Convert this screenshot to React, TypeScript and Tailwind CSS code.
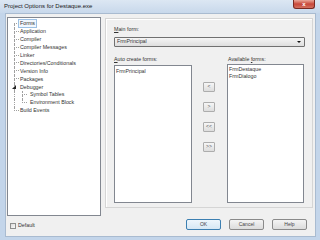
import React from 'react';

type TreeItem = { label: string; level: 0 | 1; last?: boolean; expander?: boolean; selected?: boolean };

const TREE: TreeItem[] = [
    { label: 'Forms', level: 0, selected: true },
    { label: 'Application', level: 0 },
    { label: 'Compiler', level: 0 },
    { label: 'Compiler Messages', level: 0 },
    { label: 'Linker', level: 0 },
    { label: 'Directories/Conditionals', level: 0 },
    { label: 'Version Info', level: 0 },
    { label: 'Packages', level: 0 },
    { label: 'Debugger', level: 0, expander: true },
    { label: 'Symbol Tables', level: 1 },
    { label: 'Environment Block', level: 1, last: true },
    { label: 'Build Events', level: 0, last: true },
];

// one connector column of the tree: vertical dotted line + branch to the label
const Connector = ({ last, first }: { last?: boolean; first?: boolean }) => (
    <div className="w-[5px] h-full flex flex-col shrink-0">
        <div className={`h-1/2 w-full border-b border-dotted border-[#a0a0a0] ${first ? '' : 'border-l'}`} />
        <div className={`flex-1 w-full ${last ? '' : 'border-l border-dotted border-[#a0a0a0]'}`} />
    </div>
);

const TreeRow = ({ item, index }: { item: TreeItem; index: number }) => (
    <div className="flex items-center h-[7.9px] pl-[6px]">
        {item.level === 1 && (
            <div className="w-[8px] h-full shrink-0 border-l border-dotted border-[#a0a0a0]" />
        )}
        {item.expander ? (
            <div className="w-[5px] h-full flex flex-col shrink-0">
                <div className="h-[2px] border-l border-dotted border-[#a0a0a0]" />
                <div className="h-[4px] -ml-[2px] flex items-center">
                    <svg width="4" height="4" viewBox="0 0 4 4">
                        <polygon points="4,0 4,4 0,4" fill="#262626" />
                    </svg>
                </div>
                <div className="flex-1 border-l border-dotted border-[#a0a0a0]" />
            </div>
        ) : (
            <Connector last={item.last} first={index === 0} />
        )}
        <span
            className={`whitespace-nowrap leading-[7px] px-[1px] ${item.level === 1 ? 'ml-[1px]' : '-ml-[1px]'} ${item.selected ? 'border border-[#9cc0e4] bg-[#f1f7fe] -my-[1px]' : 'border border-transparent'}`}
        >
            {item.label}
        </span>
    </div>
);

const SmallButton = ({ label }: { label: string }) => (
    <div className="w-[12px] h-[10px] rounded-[1px] border border-[#adadad] bg-linear-to-b from-[#f6f6f6] to-[#dddddd] flex items-center justify-center text-[5px] text-[#555]">
        {label}
    </div>
);

const DialogButton = ({ label, isDefault }: { label: string; isDefault?: boolean }) => (
    <div
        className={`w-[35px] h-[11px] rounded-[2px] border flex items-center justify-center text-[5px] text-[#444] bg-linear-to-b ${
            isDefault ? 'border-[#3c7fb1] from-[#eef6fc] to-[#d6e7f4]' : 'border-[#8a8a8a] from-[#f4f4f4] to-[#dcdcdc]'
        }`}
    >
        {label}
    </div>
);

export default function App() {
    return (
        <div className="w-[320px] h-[240px] bg-[#c3d5ea] flex flex-col overflow-hidden font-['Liberation_Sans',Arial,sans-serif]">
            {/* title bar */}
            <div className="h-[13px] flex items-start justify-between pl-[4px] pr-[5px] bg-linear-to-b from-[#dce7f3] to-[#c8d8eb] shrink-0">
                <span className="text-[6px] leading-[13px] text-[#1a1a1a]">Project Options for Destaque.exe</span>
                <div className="w-[22px] h-[9px] rounded-b-[3px] border border-t-0 border-[#7a2a22] bg-linear-to-b from-[#e8a699] via-[#c8473a] to-[#d2705f] flex items-center justify-center">
                    <span className="text-white text-[6px] font-bold leading-none">x</span>
                </div>
            </div>

            {/* client area */}
            <div className="ml-[5px] mr-[4px] h-[224px] bg-[#f0f0f0] border border-[#a9bbd0] flex flex-col text-[5.3px] text-[#333]">
                <div className="flex pt-[3px] pl-[1px]">
                    {/* options tree */}
                    <div className="w-[94px] h-[199px] bg-white border border-[#828790] pt-[2px] shrink-0">
                        {TREE.map((item, i) => (
                            <TreeRow key={item.label} item={item} index={i} />
                        ))}
                    </div>

                    {/* forms page */}
                    <div className="ml-[4px] mt-[1px] w-[208px] h-[190px] border border-[#d5d5d5] shadow-[inset_1px_1px_0_#ffffff] px-[8px] pt-[7px] flex flex-col">
                        <div className="leading-[7px]">
                            <span className="underline">M</span>ain form:
                        </div>
                        <div className="mt-[4px] w-[191px] h-[10px] rounded-[1px] border border-[#707070] bg-linear-to-b from-[#f5f5f5] to-[#dedede] flex items-center justify-between pl-[2px] pr-[3px]">
                            <span className="leading-none">FrmPrincipal</span>
                            <svg width="4" height="2" viewBox="0 0 4 2">
                                <polygon points="0,0 4,0 2,2" fill="#111" />
                            </svg>
                        </div>

                        <div className="flex mt-[9px]">
                            <div className="flex flex-col">
                                <div className="leading-[7px] h-[8px]">
                                    <span className="underline">A</span>uto create forms:
                                </div>
                                <div className="mt-[1px] w-[78px] h-[138px] bg-white border border-[#828790] px-[1px] pt-[2px] leading-[7px]">
                                    FrmPrincipal
                                </div>
                            </div>

                            <div className="w-[36px] flex flex-col items-center pt-[26px] gap-[10px] ml-[-1px]">
                                <SmallButton label="<" />
                                <SmallButton label=">" />
                                <SmallButton label="<<" />
                                <SmallButton label=">>" />
                            </div>

                            <div className="flex flex-col">
                                <div className="leading-[7px] h-[7px] pl-[1px]">
                                    Available <span className="underline">f</span>orms:
                                </div>
                                <div className="mt-[1px] w-[77px] h-[139px] bg-white border border-[#828790] px-[1px] pt-[1px] leading-[7px]">
                                    <div>FrmDestaque</div>
                                    <div>FrmDialogo</div>
                                </div>
                            </div>
                        </div>
                    </div>
                </div>

                {/* bottom bar */}
                <div className="flex items-center justify-between mt-[3px] pl-[4px] pr-[8px]">
                    <div className="flex items-center gap-[2px] mt-[2px]">
                        <div className="w-[6px] h-[6px] border border-[#8e8f8f] bg-linear-to-br from-[#dcdcdc] to-[#fafafa]" />
                        <span className="leading-none">Default</span>
                    </div>
                    <div className="flex gap-[8px]">
                        <DialogButton label="OK" isDefault />
                        <DialogButton label="Cancel" />
                        <DialogButton label="Help" />
                    </div>
                </div>
            </div>
        </div>
    );
}
